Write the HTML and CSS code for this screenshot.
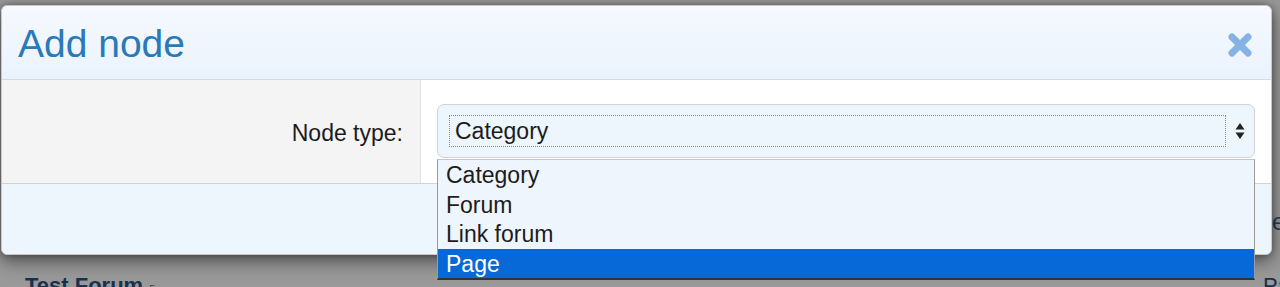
FILE: index.html
```html
<!DOCTYPE html>
<html>
<head>
<meta charset="utf-8">
<title>Add node</title>
<link rel="stylesheet" href="styles.css">
</head>
<body>

<div class="page">
	<div class="pageSide">Pe</div>
	<div class="pageRow">
		<span class="forumTitle">Test Forum <small>5</small></span>
		<span class="pageRight">Pa</span>
	</div>
</div>

<div class="overlay"></div>

<div class="dialog">
	<div class="dialogHead">
		<h2>Add node</h2>
		<a class="close" href="#" title="Close">
			<svg width="26" height="26" viewBox="0 0 26 26">
				<path d="M5 5 L21 21 M21 5 L5 21" stroke="#85b4e4" stroke-width="7" stroke-linecap="round"/>
			</svg>
		</a>
	</div>

	<div class="formRow">
		<div class="formLabel">Node type:</div>
		<div class="formField">
			<div class="selectBox">
				<span class="selectValue">Category</span>
				<svg class="selectArrows" width="10" height="18" viewBox="0 0 10 18">
					<path d="M5 1 L9.5 7.5 H0.5 Z M5 17 L9.5 10.5 H0.5 Z" fill="#222"/>
				</svg>
			</div>
		</div>
	</div>

	<div class="dialogFoot"></div>

	<ul class="dropList">
		<li>Category</li>
		<li>Forum</li>
		<li>Link forum</li>
		<li class="active">Page</li>
	</ul>
</div>

</body>
</html>
```

FILE: styles.css
```css
* {margin:0; padding:0; box-sizing:border-box;}

body {background:#c4c4c4; font-family:"Liberation Sans", Arial, sans-serif; height:287px; overflow:hidden; position:relative;}

.page {height:287px; position:relative;}
.pageSide {position:absolute; left:1256px; top:208px; color:#2b4d72; font-size:24px;}
.pageRow {position:absolute; left:25px; top:273px; width:1300px; display:flex; justify-content:space-between;}
.forumTitle {color:#1f3f66; font-weight:bold; font-size:22px;}
.forumTitle small {font-size:11px; font-weight:normal; color:#555;}
.pageRight {color:#1f3f66; font-size:22px; margin-right:35px;}

.overlay {position:absolute; left:0; top:0; right:0; bottom:0; background:rgba(0,0,0,0.22);}

.dialog {position:absolute; left:1px; top:5px; width:1271px; height:250px; background:#edf5fd; border:1px solid #c8c8c8; border-radius:6px; box-shadow:0 6px 18px rgba(0,0,0,0.5), 0 0 6px rgba(0,0,0,0.3); display:flex; flex-direction:column;}

.dialogHead {height:74px; flex:none; display:flex; align-items:center; justify-content:space-between; padding:0 18px 0 16px; background:linear-gradient(#f6f9fe, #eaf3fd); border-bottom:1px solid #dadada; border-radius:6px 6px 0 0;}
.dialogHead h2 {font-weight:normal; font-size:39px; color:#2a79b8; margin-top:3px;}
.close {display:block; width:26px; height:26px; margin-top:5px;}
.close svg {display:block;}

.formRow {height:104px; flex:none; display:flex; border-bottom:1px solid #d2d2d2; background:#fff;}
.formLabel {width:419px; background:#f4f4f4; border-right:1px solid #e2e2e2; text-align:right; padding:40px 17px 0 0; font-size:23px; color:#1c1c1c;}
.formField {flex:1; padding:24px 16px 0 16px;}

.selectBox {height:54px; width:818px; border:1px solid #d3d3d3; border-radius:7px; background:#edf5fd; display:flex; align-items:center; padding:0 9px 0 11px;}
.selectValue {flex:1; height:32px; border:1px dotted #8a8a8a; font-size:23px; line-height:30px; padding-left:5px; color:#1c1c1c;}
.selectArrows {margin-left:9px;}

.dialogFoot {flex:1; background:#edf5fd; border-radius:0 0 6px 6px;}

.dropList {position:absolute; left:435px; top:153px; width:818px; list-style:none; background:#eef5fd; border:1px solid #9a9a9a; border-bottom:2px solid #333; border-top-color:#c6c6c6;}
.dropList li {height:29.5px; line-height:31px; padding-left:8px; font-size:23px; color:#1c1c1c;}
.dropList li.active {background:#0769d7; color:#fff;}
```
